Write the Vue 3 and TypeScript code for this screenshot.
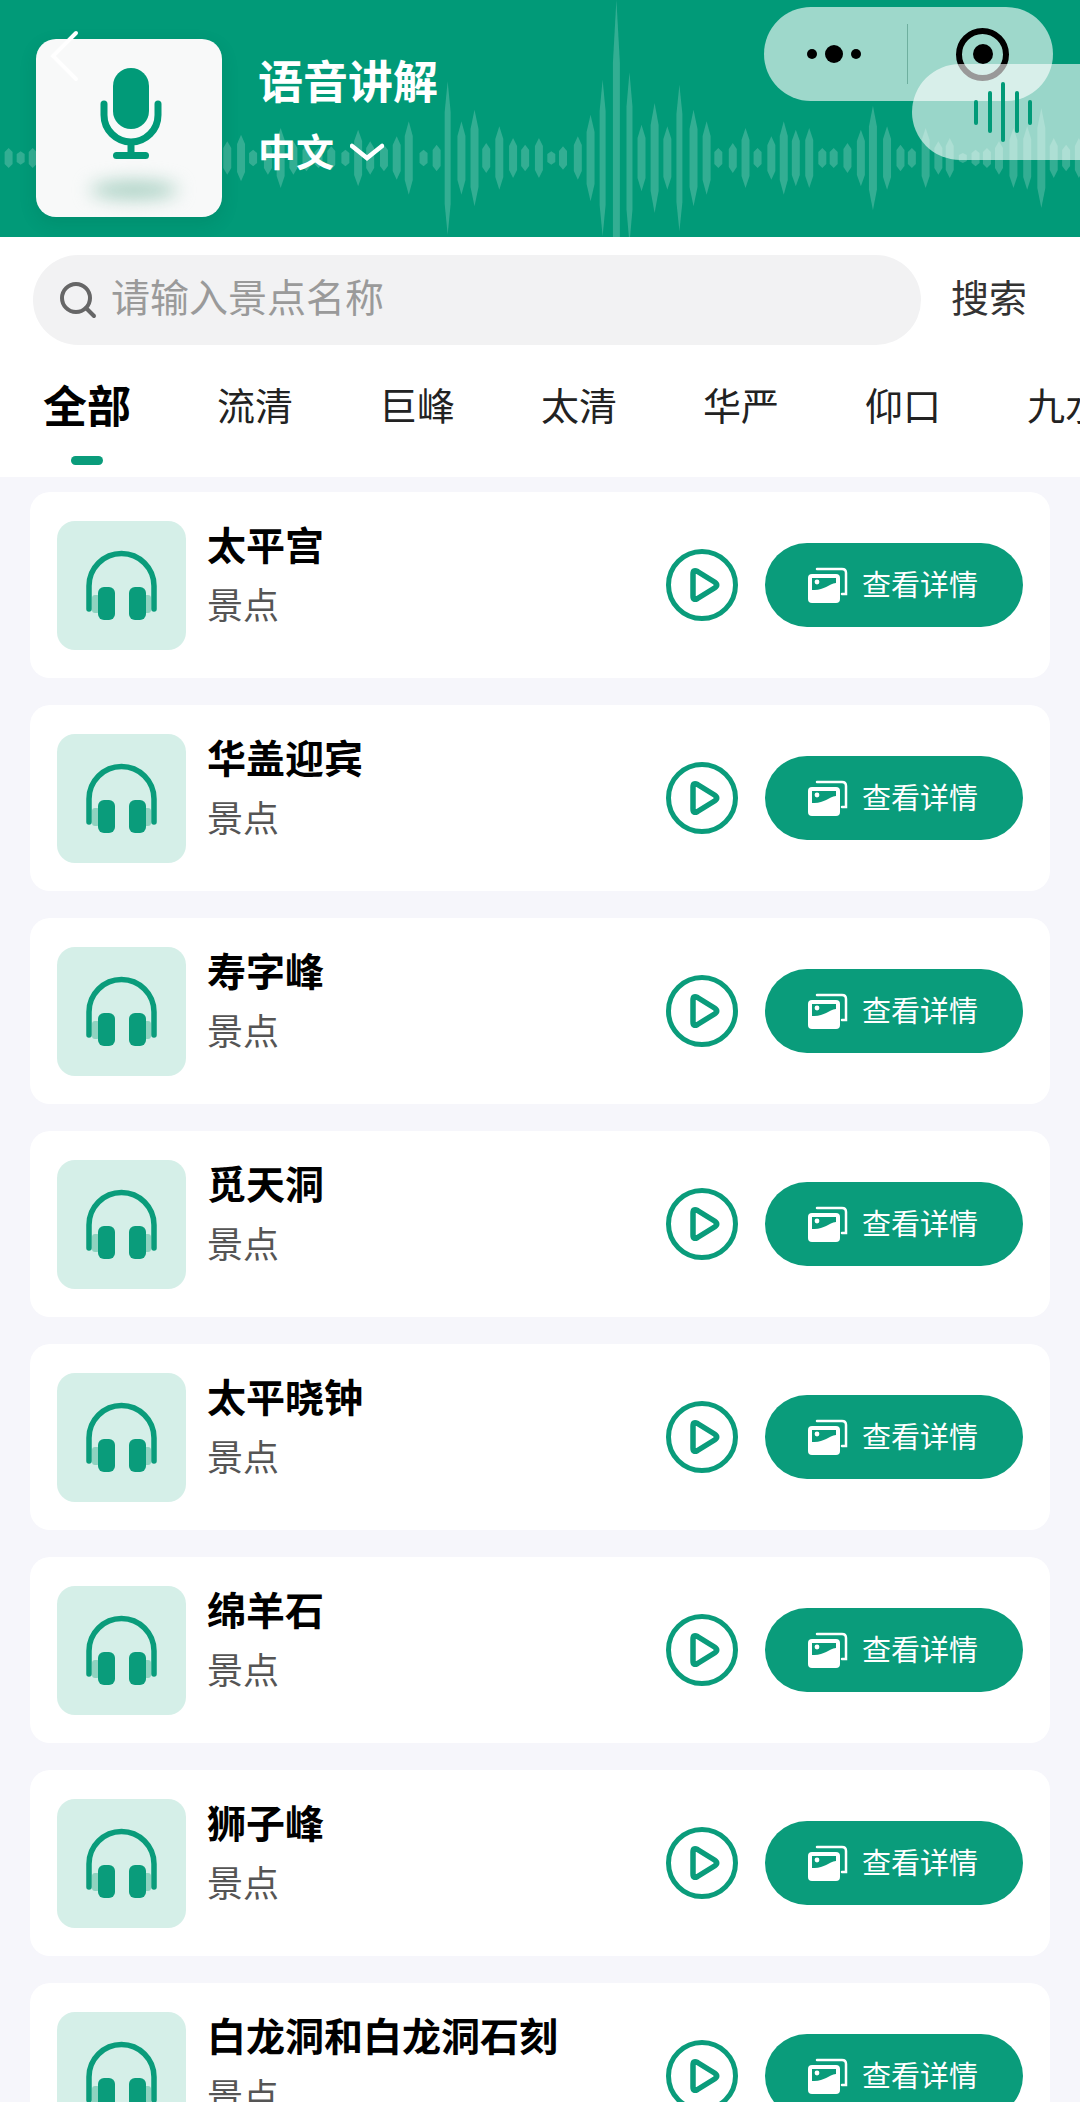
<script setup lang="ts">
import { ref } from 'vue'

const tabs: string[] = ['全部', '流清', '巨峰', '太清', '华严', '仰口', '九水']
const spots: string[] = [
    '太平宫',
    '华盖迎宾',
    '寿字峰',
    '觅天洞',
    '太平晓钟',
    '绵羊石',
    '狮子峰',
    '白龙洞和白龙洞石刻',
]
const pillBars: number[] = [25, 42, 60, 42, 25]

const activeTab = ref(0)
const keyword = ref('')

// x / half height of each wave bar, read off the reference at 2.9x
const waveRaw: number[][] = [
    [25, 30], [60, 20], [95, 30], [660, 50], [700, 70], [735, 25], [778, 50], [815, 90],
    [852, 50], [890, 40], [925, 30], [962, 35], [1003, 25], [1040, 85], [1075, 50],
    [1115, 40], [1152, 65], [1187, 110], [1230, 25], [1268, 40], [1300, 230], [1340, 110],
    [1378, 145], [1412, 45], [1450, 95], [1490, 60], [1525, 40], [1565, 60], [1601, 20],
    [1635, 35], [1678, 65], [1715, 130], [1750, 235], [1790, 475], [1828, 257], [1863, 100],
    [1901, 165], [1938, 95], [1973, 220], [2014, 145], [2052, 110], [2086, 30], [2128, 45],
    [2165, 90], [2200, 30], [2240, 65], [2276, 110], [2311, 85], [2350, 90], [2388, 30],
    [2421, 30], [2461, 45], [2500, 85], [2535, 157], [2576, 95], [2615, 40], [2648, 30],
    [2688, 90], [2725, 50], [2758, 60], [2796, 15], [2833, 25], [2866, 30], [2901, 50],
    [2943, 90], [2983, 95], [3024, 150], [3060, 60], [3096, 40], [3133, 60],
]

const waveBars: string[] = waveRaw.map(([zx, zh]) => {
    const x = zx / 2.904
    const h = zh / 3
    const w = h > 140 ? 3.5 : h > 60 ? 3 : 4
    const cy = 158
    return [
        [x, cy - h],
        [x + w, cy - h * 0.6],
        [x + w, cy + h * 0.6],
        [x, cy + h],
        [x - w, cy + h * 0.6],
        [x - w, cy - h * 0.6],
    ]
        .map((p) => p.join(','))
        .join(' ')
})
</script>

<template>
    <div class="page">
        <header class="hero">
            <svg class="wave" viewBox="0 0 1080 237" aria-hidden="true">
                <polygon v-for="(pts, i) in waveBars" :key="i" :points="pts" />
            </svg>

            <div class="tile">
                <svg class="tile-art" viewBox="0 0 186 178">
                    <ellipse class="tile-glow" cx="98" cy="151" rx="44" ry="9" />
                    <rect x="77" y="29" width="36" height="61" rx="18" fill="#019a78" />
                    <path
                        d="M68 65v11a27 27 0 0 0 54 0V65M95 103v12"
                        fill="none"
                        stroke="#019a78"
                        stroke-width="7"
                        stroke-linecap="round"
                    />
                    <rect x="77" y="113" width="36" height="7" rx="3.5" fill="#019a78" />
                </svg>
            </div>

            <div class="hero-text">
                <h1 class="hero-title">语音讲解</h1>
                <div class="hero-lang">
                    <span>中文</span>
                    <svg class="chevron" viewBox="0 0 34 18">
                        <path
                            d="M2 3l15 12L32 3"
                            fill="none"
                            stroke="#fff"
                            stroke-width="4.5"
                            stroke-linecap="round"
                        />
                    </svg>
                </div>
            </div>

            <!-- back arrow runs across the tile in the reference -->
            <svg class="back" viewBox="0 0 32 54">
                <path
                    d="M26 3L3 26l23 23"
                    fill="none"
                    stroke="#fff"
                    stroke-width="4"
                    stroke-linecap="round"
                />
            </svg>

            <div class="capsule">
                <span class="dots"><i></i><i class="big"></i><i></i></span>
                <span class="capsule-line"></span>
                <span class="target"><i></i></span>
            </div>

            <div class="float-pill">
                <i v-for="(h, i) in pillBars" :key="i" :style="{ height: h + 'px' }"></i>
            </div>
        </header>

        <section class="filters">
            <div class="search">
                <div class="search-box">
                    <svg class="search-icon" viewBox="0 0 40 40">
                        <circle cx="18" cy="18" r="14" fill="none" stroke="#666" stroke-width="4" />
                        <path d="M28 28l8 8" stroke="#666" stroke-width="4" stroke-linecap="round" />
                    </svg>
                    <input v-model="keyword" class="search-input" placeholder="请输入景点名称" />
                </div>
                <span class="search-btn">搜索</span>
            </div>

            <nav class="tabs">
                <a
                    v-for="(tab, i) in tabs"
                    :key="tab"
                    class="tab"
                    :class="{ active: activeTab === i }"
                    @click="activeTab = i"
                >
                    {{ tab }}
                </a>
            </nav>
        </section>

        <main class="list">
            <article v-for="spot in spots" :key="spot" class="card">
                <div class="thumb">
                    <svg viewBox="0 0 129 129">
                        <rect x="35" y="74" width="8" height="18" rx="3" fill="#8fd3c0" />
                        <rect x="86" y="74" width="8" height="18" rx="3" fill="#8fd3c0" />
                        <path
                            d="M32 88V65a32.5 32.5 0 0 1 65 0v23"
                            fill="none"
                            stroke="#0a9c7b"
                            stroke-width="5.5"
                            stroke-linecap="round"
                        />
                        <rect x="41" y="66" width="17" height="33" rx="6" fill="#0a9c7b" />
                        <rect x="72" y="66" width="17" height="33" rx="6" fill="#0a9c7b" />
                    </svg>
                </div>
                <div class="info">
                    <h2 class="name">{{ spot }}</h2>
                    <p class="kind">景点</p>
                </div>
                <svg class="play" viewBox="0 0 72 72">
                    <circle cx="36" cy="36" r="33.5" fill="none" stroke="#0a9c7b" stroke-width="5" />
                    <path
                        d="M27 25q0-5 4.5-2.5l17 10.5q4.500 3 0 6l-17 10.500q-4.500 2.500-4.500-2.500z"
                        fill="none"
                        stroke="#0a9c7b"
                        stroke-width="5.500"
                        stroke-linejoin="round"
                    />
                </svg>
                <button class="detail" type="button">
                    <svg class="detail-icon" viewBox="0 0 40 36">
                        <path
                            d="M9 2h25q4 0 4 4v21h-4"
                            fill="none"
                            stroke="#fff"
                            stroke-width="2.5"
                            stroke-linecap="round"
                        />
                        <rect x="0" y="7" width="32" height="29" rx="4" fill="#fff" />
                        <path d="M4 11h24v5c-8 1-12 8-24 7z" fill="#0a9c7b" />
                        <circle cx="9" cy="15" r="2.4" fill="#fff" />
                    </svg>
                    <span>查看详情</span>
                </button>
            </article>
        </main>
    </div>
</template>

<style scoped>
.page {
    width: 1080px;
    height: 2102px;
    overflow: hidden;
    background: #f6f6fb;
    font-family: 'Noto Sans CJK SC', 'Noto Sans', sans-serif;
}

.hero {
    position: relative;
    height: 237px;
    overflow: hidden;
    background: #019a78;
    display: flex;
    padding: 39px 0 0 36px;
    box-sizing: border-box;
}
.wave {
    position: absolute;
    left: 0;
    top: 0;
    width: 1080px;
    height: 237px;
}
.wave polygon {
    fill: rgba(255, 255, 255, 0.2);
}
.tile {
    position: relative;
    width: 186px;
    height: 178px;
    border-radius: 20px;
    background: #f8f9f9;
    box-shadow: 0 6px 18px rgba(0, 60, 40, 0.12);
}
.tile-art {
    display: block;
    width: 186px;
    height: 178px;
}
.tile-glow {
    fill: #a8d0c2;
    filter: blur(9px);
}
.hero-text {
    position: relative;
    margin-left: 36px;
    color: #fff;
}
.hero-title {
    margin: 16px 0 0;
    font-size: 45px;
    line-height: 50px;
    font-weight: 700;
}
.hero-lang {
    display: flex;
    align-items: center;
    gap: 16px;
    margin-top: 23px;
    font-size: 38px;
    line-height: 44px;
    font-weight: 700;
}
.chevron {
    width: 34px;
    height: 18px;
    margin-top: 4px;
}
.back {
    position: absolute;
    left: 50px;
    top: 30px;
    width: 32px;
    height: 54px;
}
.capsule {
    position: absolute;
    left: 764px;
    top: 7px;
    width: 289px;
    height: 94px;
    border-radius: 47px;
    background: rgba(255, 255, 255, 0.62);
    display: flex;
    align-items: center;
}
.dots {
    display: flex;
    align-items: center;
    gap: 8px;
    margin-left: 43px;
}
.dots i {
    width: 10px;
    height: 10px;
    border-radius: 50%;
    background: #000;
}
.dots i.big {
    width: 18px;
    height: 18px;
}
.capsule-line {
    width: 1px;
    height: 60px;
    margin-left: 46px;
    background: rgba(0, 80, 60, 0.3);
}
.target {
    width: 53px;
    height: 53px;
    margin-left: 48px;
    box-sizing: border-box;
    border: 6px solid #000;
    border-radius: 50%;
    display: flex;
    align-items: center;
    justify-content: center;
}
.target i {
    width: 20px;
    height: 20px;
    border-radius: 50%;
    background: #000;
}
.float-pill {
    position: absolute;
    left: 912px;
    top: 64px;
    width: 220px;
    height: 96px;
    border-radius: 48px;
    background: rgba(255, 255, 255, 0.6);
    display: flex;
    align-items: center;
    gap: 9.5px;
    padding-left: 62px;
    box-sizing: border-box;
}
.float-pill i {
    width: 4px;
    border-radius: 2px;
    background: #019a78;
}

.filters {
    height: 240px;
    background: #fff;
    padding-top: 18px;
    box-sizing: border-box;
}
.search {
    display: flex;
    align-items: center;
    padding-left: 33px;
}
.search-box {
    width: 888px;
    height: 90px;
    border-radius: 45px;
    background: #f2f2f3;
    display: flex;
    align-items: center;
    padding-left: 25px;
    box-sizing: border-box;
}
.search-icon {
    width: 40px;
    height: 40px;
    flex: none;
}
.search-input {
    flex: 1;
    min-width: 0;
    margin: 0 0 10px 13px;
    border: 0;
    outline: 0;
    padding: 0;
    background: transparent;
    font: inherit;
    font-size: 39px;
    color: #333;
}
.search-input::placeholder {
    color: #9a9a9a;
}
.search-btn {
    margin: 0 0 8px 30px;
    font-size: 38px;
    line-height: 50px;
    color: #333;
}
.tabs {
    display: flex;
    align-items: flex-start;
    gap: 86px;
    margin-top: 31px;
    padding-left: 43px;
    white-space: nowrap;
}
.tab {
    position: relative;
    flex: none;
    font-size: 38px;
    line-height: 56px;
    color: #222;
}
.tab.active {
    font-size: 44px;
    font-weight: 700;
    color: #000;
}
.tab.active::after {
    content: '';
    position: absolute;
    left: 28px;
    top: 80px;
    width: 32px;
    height: 9px;
    border-radius: 5px;
    background: #0a9c7b;
}

.list {
    display: flex;
    flex-direction: column;
    gap: 27px;
    padding: 15px 30px 0;
}
.card {
    flex: none;
    height: 186px;
    box-sizing: border-box;
    padding: 0 27px;
    border-radius: 20px;
    background: #fff;
    display: flex;
    align-items: center;
}
.thumb {
    width: 129px;
    height: 129px;
    flex: none;
    border-radius: 18px;
    background: #d5efe8;
}
.thumb svg {
    display: block;
    width: 129px;
    height: 129px;
}
.info {
    flex: 1;
    min-width: 0;
    margin-left: 21px;
    margin-top: -26px;
}
.name {
    margin: 0;
    font-size: 39px;
    line-height: 46px;
    font-weight: 700;
    color: #000;
}
.kind {
    margin: 16px 0 0;
    font-size: 36px;
    line-height: 42px;
    color: #555;
}
.play {
    width: 72px;
    height: 72px;
    flex: none;
    margin-right: 27px;
}
.detail {
    width: 258px;
    height: 84px;
    flex: none;
    border: 0;
    border-radius: 42px;
    background: #0a9c7b;
    color: #fff;
    font: inherit;
    font-size: 29px;
    display: flex;
    align-items: center;
    padding: 0 0 0 43px;
}
.detail-icon {
    width: 40px;
    height: 36px;
    flex: none;
}
.detail span {
    margin: 0 0 5px 14px;
}
</style>

<style>
html,
body {
    margin: 0;
    overflow: hidden;
}
</style>
